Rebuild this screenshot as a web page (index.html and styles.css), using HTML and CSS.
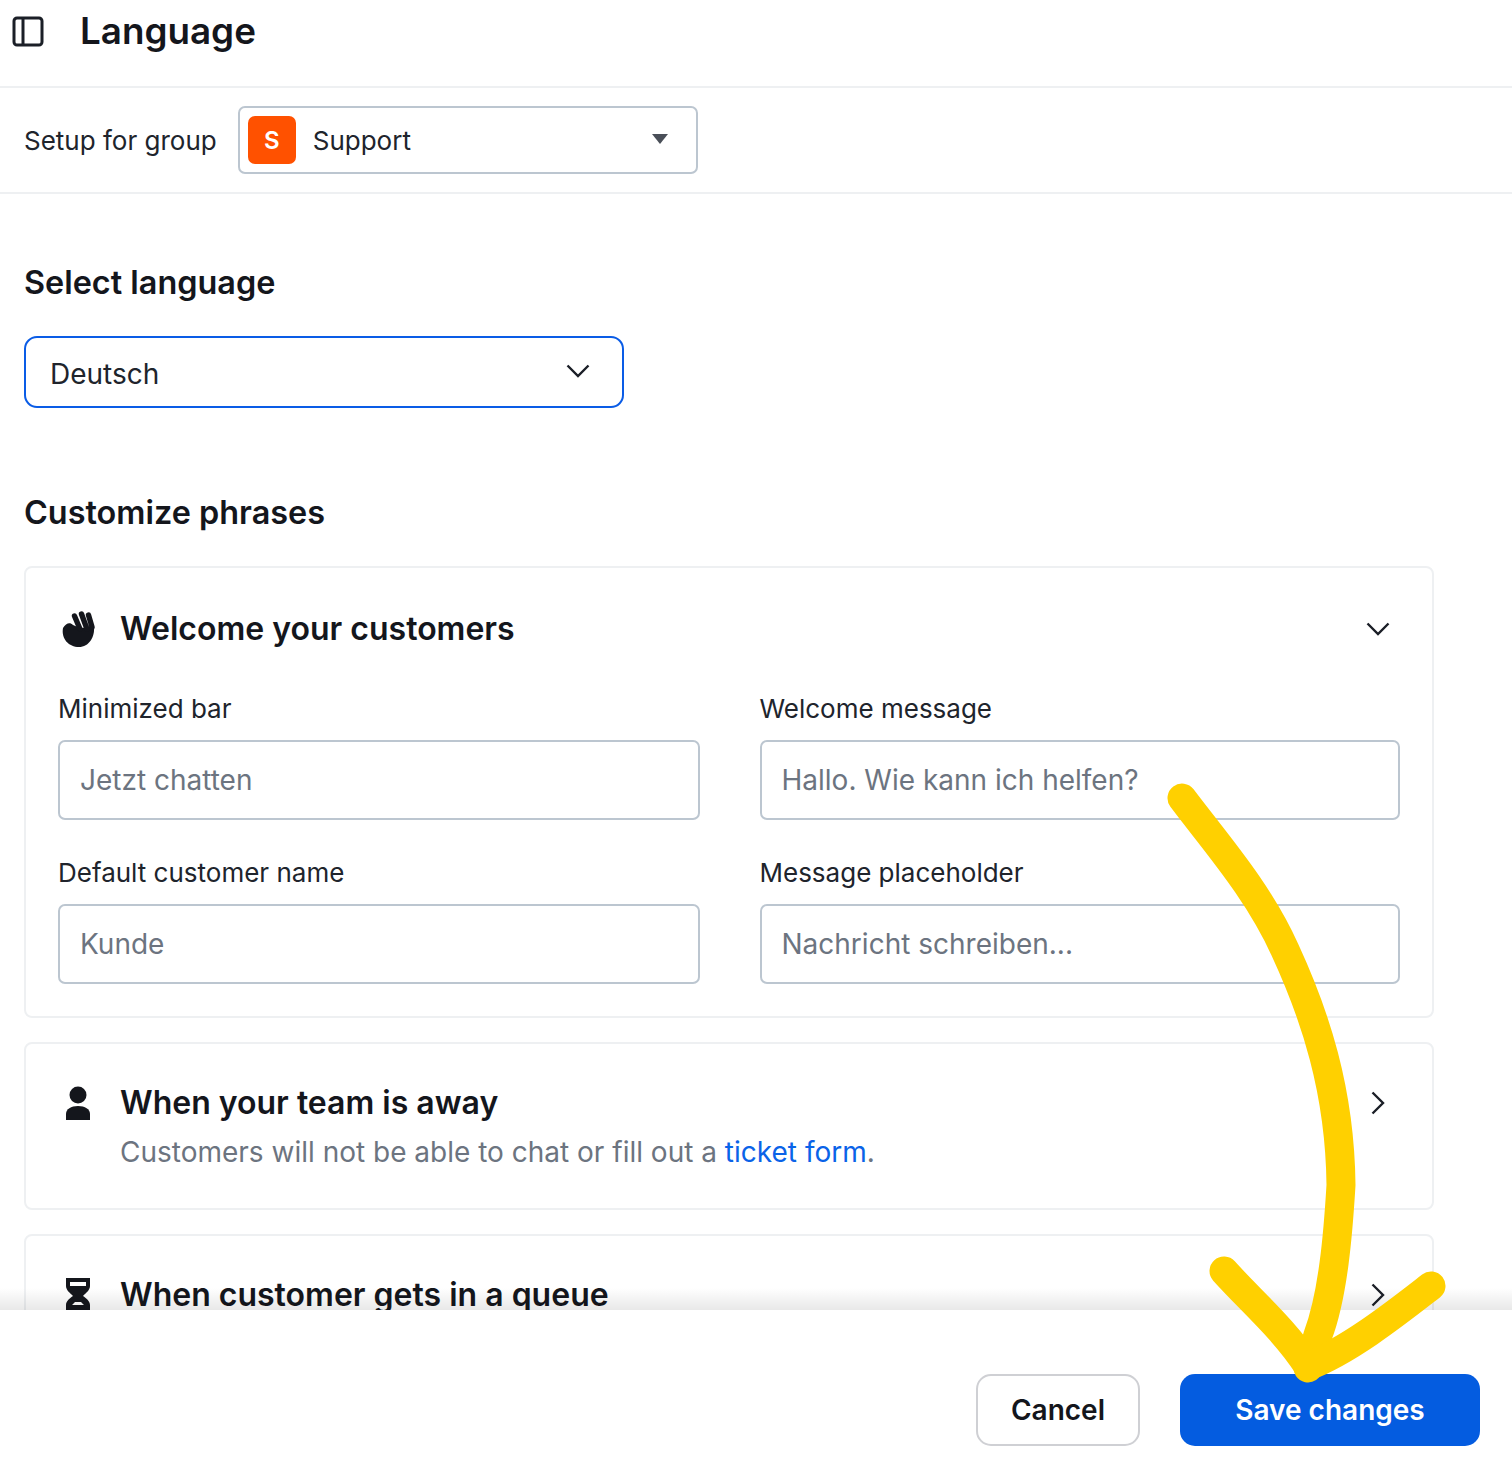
FILE: index.html
```html
<!DOCTYPE html>
<html lang="en">
<head>
<meta charset="utf-8">
<title>Language</title>
<link rel="stylesheet" href="styles.css">
</head>
<body>
<div class="app">
  <header class="topbar">
    <svg class="panel-icon" viewBox="0 0 32 32" fill="none" stroke="#1b1f27" stroke-width="3"><rect x="2" y="3" width="28" height="27" rx="3"/><path d="M11 3v27"/></svg>
    <h1 class="page-title">Language</h1>
  </header>
  <div class="group-row">
    <span class="group-label">Setup for group</span>
    <div class="group-select">
      <span class="group-badge">S</span>
      <span class="group-name">Support</span>
      <span class="group-caret"></span>
    </div>
  </div>
  <main class="content">
    <h2 class="section-title first">Select language</h2>
    <div class="lang-select">
      <span>Deutsch</span>
      <svg class="chev-down" viewBox="0 0 24 14" fill="none" stroke="#1b1f27" stroke-width="2.4"><path d="M1.5 1.5 12 12 22.5 1.5"/></svg>
    </div>
    <h2 class="section-title second">Customize phrases</h2>
    <section class="card open">
      <div class="card-head">
        <svg class="card-icon" viewBox="0 0 36 40"><path fill="#14161c" d="M3 19C6 14 10 13 13 16L20 19 34 18C35 28 29 38 19 38 9 38 1 30 3 19Z"/><path fill="none" stroke="#14161c" stroke-width="5.4" stroke-linecap="round" d="M14.500 7 20 20M21.500 5 27 20M28.500 6 32 18"/></svg>
        <h3 class="card-title">Welcome your customers</h3>
        <svg class="chev-down card-chev" viewBox="0 0 24 14" fill="none" stroke="#1b1f27" stroke-width="2.4"><path d="M1.5 1.5 12 12 22.5 1.5"/></svg>
      </div>
      <div class="fields">
        <label class="field"><span class="field-label">Minimized bar</span><span class="field-input">Jetzt chatten</span></label>
        <label class="field"><span class="field-label">Welcome message</span><span class="field-input">Hallo. Wie kann ich helfen?</span></label>
        <label class="field"><span class="field-label">Default customer name</span><span class="field-input">Kunde</span></label>
        <label class="field"><span class="field-label">Message placeholder</span><span class="field-input">Nachricht schreiben...</span></label>
      </div>
    </section>
    <section class="card closed">
      <div class="card-head">
        <svg class="card-icon" viewBox="0 0 36 40"><circle cx="18" cy="12" r="8.5" fill="#14161c"/><path fill="#14161c" d="M6 37V31C6 26 11 23 18 23S30 26 30 31V37Z"/></svg>
        <h3 class="card-title">When your team is away</h3>
        <svg class="chev-right" viewBox="0 0 14 24" fill="none" stroke="#1b1f27" stroke-width="2.4"><path d="M1.5 1.5 12 12 1.5 22.5"/></svg>
      </div>
      <p class="card-desc">Customers will not be able to chat or fill out a <a class="link" href="#">ticket form</a>.</p>
    </section>
    <section class="card closed">
      <div class="card-head">
        <svg class="card-icon" viewBox="0 0 36 40"><path fill="#14161c" d="M6 3H30V11C30 15 26 18 23 21C26 23 30 26 30 30V44H6V30C6 26 10 23 13 21C10 18 6 15 6 11Z"/><path fill="#fff" d="M10 7H26V11H10ZM15 27H21L24 30H12Z"/></svg>
        <h3 class="card-title">When customer gets in a queue</h3>
        <svg class="chev-right" viewBox="0 0 14 24" fill="none" stroke="#1b1f27" stroke-width="2.4"><path d="M1.5 1.5 12 12 1.5 22.5"/></svg>
      </div>
    </section>
    <div class="fade"></div>
  </main>
  <footer class="actions">
    <button class="btn cancel" type="button">Cancel</button>
    <button class="btn save" type="button">Save changes</button>
  </footer>
  <svg class="scribble" viewBox="0 0 1512 1476" fill="none" stroke="#ffd000" stroke-width="29" stroke-linecap="round" stroke-linejoin="round">
    <path d="M1182 798C1215 842 1258 890 1285 950C1315 1015 1340 1090 1341 1185C1338 1235 1333 1295 1318 1335C1314 1350 1310 1358 1308 1368"/>
    <path d="M1224 1271C1250 1300 1285 1330 1308 1366"/>
    <path d="M1431 1286C1400 1310 1350 1350 1308 1366"/>
  </svg>
</div>
</body>
</html>
```
FILE: styles.css
```css
* { box-sizing: border-box; }
html, body { margin: 0; background: #fff; }
body { font-family: Inter, "Liberation Sans", sans-serif; color: #14161c; }
.app { position: relative; width: 1512px; height: 1476px; display: flex; flex-direction: column; overflow: hidden; }

.topbar { flex: none; height: 88px; padding: 0 0 24px 12px; display: flex; align-items: center; border-bottom: 2px solid #eef0f2; }
.panel-icon { width: 32px; height: 32px; flex: none; }
.page-title { margin: 0 0 0 36px; font-size: 36.8px; line-height: 40px; font-weight: 600; letter-spacing: 0; }

.group-row { flex: none; height: 106px; padding: 0 24px; display: flex; align-items: center; gap: 21px; border-bottom: 2px solid #eef0f2; }
.group-label { padding-top: 2px; font-size: 26px; line-height: 32px; color: #20242c; }
.group-select { width: 460px; height: 68px; padding: 0 28px 0 8px; border: 2px solid #bcc6d0; border-radius: 7px; display: flex; align-items: center; }
.group-badge { width: 48px; height: 48px; border-radius: 7px; background: #ff5100; color: #fff; font-size: 24px; font-weight: 600; display: flex; align-items: center; justify-content: center; }
.group-name { flex: 1; margin-left: 17px; font-size: 26px; color: #20242c; }
.group-caret { width: 0; height: 0; border-left: 8px solid transparent; border-right: 8px solid transparent; border-top: 10px solid #4a4f58; margin-top: -3px; }

.content { position: relative; flex: 1; min-height: 0; overflow: hidden; padding: 0 78px 0 24px; }
.section-title { margin: 0; font-size: 32.4px; line-height: 40px; font-weight: 600; }
.section-title.first { margin-top: 69px; }
.section-title.second { margin-top: 85px; }
.lang-select { width: 600px; height: 72px; margin-top: 33px; padding: 3px 32px 0 24px; border: 2px solid #0a5ce6; border-radius: 13px; display: flex; align-items: center; justify-content: space-between; font-size: 28px; color: #20242c; }
.chev-down { width: 24px; height: 14px; flex: none; }
.lang-select .chev-down { margin-top: -6px; }

.card { border: 2px solid #eef0f2; border-radius: 8px; padding: 0 32px; margin-bottom: 24px; }
.card.open { margin-top: 33px; height: 452px; }
.card.closed { height: 168px; }
.card-head { display: flex; align-items: center; height: 40px; margin-top: 39px; }
.card.open .card-head { margin-top: 41px; }
.card-icon { width: 36px; height: 40px; flex: none; margin: 0 24px 0 2px; }
.card-title { flex: 1; margin: 0; font-size: 32px; line-height: 40px; font-weight: 600; }
.card-chev { margin-right: 10px; }
.chev-right { width: 14px; height: 24px; flex: none; margin-right: 15px; }
.card-desc { margin: 9px 0 0 62px; font-size: 28px; line-height: 40px; color: #6c7480; }
.link { color: #0a63e8; text-decoration: none; }

.fields { display: grid; grid-template-columns: 641.5px 640.5px; column-gap: 60px; row-gap: 37px; margin-top: 44px; }
.field { display: flex; flex-direction: column; gap: 15px; }
.field-label { font-size: 26px; line-height: 32px; color: #20242c; }
.field-input { height: 80px; padding: 0 20px; border: 2px solid #bcc6d0; border-radius: 7px; display: flex; align-items: center; font-size: 28px; color: #6c7480; }

.fade { position: absolute; left: 0; right: 0; bottom: 0; height: 22px; background: linear-gradient(to bottom, rgba(0,0,0,0), rgba(0,0,0,.09)); }

.actions { flex: none; height: 166px; padding: 64px 32px 0 0; display: flex; justify-content: flex-end; align-items: flex-start; gap: 40px; background: #fff; }
.btn { height: 72px; border-radius: 15px; font-family: inherit; font-size: 28px; font-weight: 600; }
.cancel { width: 164px; background: #fff; border: 2px solid #cfd0d4; color: #14161c; }
.save { width: 300px; background: #045ce0; border: none; color: #fff; }

.scribble { position: absolute; left: 0; top: 0; width: 1512px; height: 1476px; pointer-events: none; }
```
